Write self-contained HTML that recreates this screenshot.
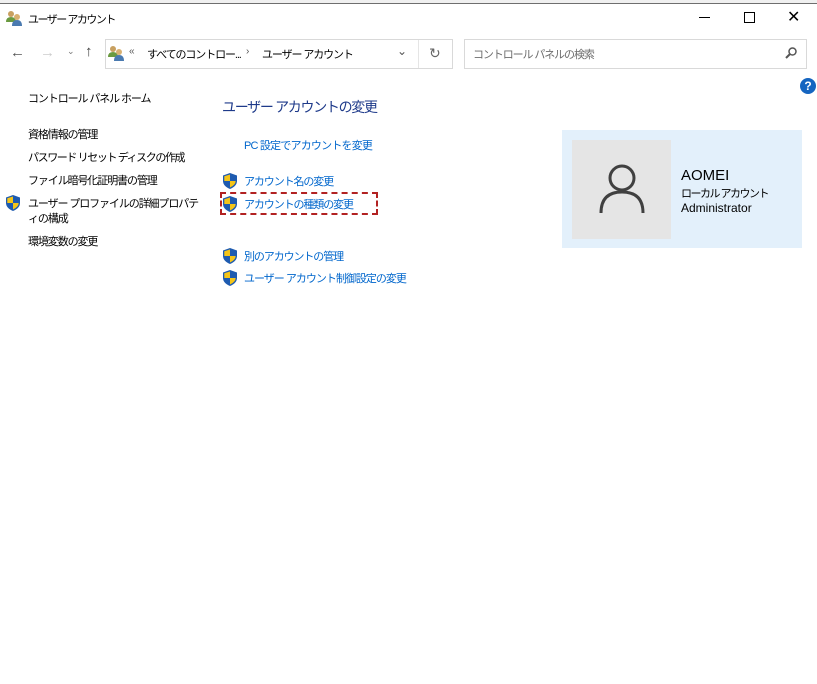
<!DOCTYPE html><html><head><meta charset="utf-8"><style>
body{margin:0;width:817px;height:684px;background:#fff;position:relative;overflow:hidden;font-family:"Liberation Sans","Noto Sans CJK JP",sans-serif;font-size:12px;color:#000}
.a{position:absolute;white-space:nowrap}
.j{font-size:11px;letter-spacing:-1.1px}
.l{color:#0066cc}
.sh{position:absolute;width:14px;height:16px}
</style></head><body>
<div class="a" style="left:0;top:0;width:817px;height:3px;background:#f0f0f0;border-bottom:1px solid #6e6e6e"></div>
<svg class="a" style="left:6px;top:10px" width="16" height="16"><circle cx="5" cy="4" r="3" fill="#c8a060"/><path d="M0 12q0-5 5-5t5 5z" fill="#6a9a40"/><circle cx="11" cy="7" r="3" fill="#d8b070"/><path d="M6 16q0-6 5-6t5 6z" fill="#4a7ab0"/></svg>
<div class="a j" style="left:28px;top:11px;letter-spacing:-1.5px">ユーザー アカウント</div>
<div class="a" style="left:699px;top:17px;width:11px;height:1px;background:#000"></div>
<div class="a" style="left:744px;top:12px;width:9px;height:9px;border:1px solid #000"></div>
<div class="a" style="left:787px;top:7px;font-size:16px">✕</div>
<div class="a" style="left:10px;top:44px;font-size:15px;color:#555">←</div>
<div class="a" style="left:40px;top:44px;font-size:15px;color:#ccc">→</div>
<div class="a" style="left:67px;top:46px;font-size:9px;color:#777">⌄</div>
<div class="a" style="left:85px;top:43px;font-size:15px;color:#444">↑</div>
<div class="a" style="left:105px;top:39px;width:346px;height:28px;border:1px solid #d9d9d9"></div>
<div class="a" style="left:418px;top:40px;width:1px;height:28px;background:#e5e5e5"></div>
<svg class="a" style="left:108px;top:45px" width="16" height="16"><circle cx="5" cy="4" r="3" fill="#c8a060"/><path d="M0 12q0-5 5-5t5 5z" fill="#6a9a40"/><circle cx="11" cy="7" r="3" fill="#d8b070"/><path d="M6 16q0-6 5-6t5 6z" fill="#4a7ab0"/></svg>
<div class="a" style="left:129px;top:46px;font-size:10px;color:#555">«</div>
<div class="a j" style="left:147px;top:46px">すべてのコントロー...</div>
<div class="a" style="left:246px;top:46px;font-size:10px;color:#555">›</div>
<div class="a j" style="left:262px;top:46px">ユーザー アカウント</div>
<div class="a" style="left:397px;top:44px;font-size:12px;color:#555">⌄</div>
<div class="a" style="left:429px;top:45px;font-size:14px;color:#666">↻</div>
<div class="a" style="left:464px;top:39px;width:341px;height:28px;border:1px solid #d9d9d9"></div>
<div class="a j" style="left:473px;top:46px;color:#6d6d6d">コントロール パネルの検索</div>
<svg class="a" style="left:784px;top:46px" width="14" height="14"><circle cx="8.5" cy="5.5" r="3.5" fill="none" stroke="#555" stroke-width="1.5"/><path d="M6 8L2 12" stroke="#555" stroke-width="2"/></svg>
<div class="a" style="left:800px;top:78px;width:16px;height:16px;border-radius:50%;background:#1565c0;color:#fff;font-weight:bold;font-size:12px;text-align:center;line-height:16px">?</div>
<div class="a j" style="left:28px;top:90px">コントロール パネル ホーム</div>
<div class="a j" style="left:28px;top:126px">資格情報の管理</div>
<div class="a j" style="left:28px;top:149px;letter-spacing:-1.4px">パスワード リセット ディスクの作成</div>
<div class="a j" style="left:28px;top:172px">ファイル暗号化証明書の管理</div>
<div class="a j" style="left:28px;top:195px">ユーザー プロファイルの詳細プロパテ</div>
<div class="a j" style="left:28px;top:210px">ィの構成</div>
<div class="a j" style="left:28px;top:233px">環境変数の変更</div>
<div class="a" style="left:222px;top:97px;font-size:14px;letter-spacing:-1.3px;color:#1e3a8a">ユーザー アカウントの変更</div>
<div class="a l j" style="left:244px;top:137px;letter-spacing:-0.8px">PC 設定でアカウントを変更</div>
<div class="a l j" style="left:244px;top:173px">アカウント名の変更</div>
<div class="a l j" style="left:244px;top:196px">アカウントの種類の変更</div>
<div class="a l j" style="left:244px;top:248px">別のアカウントの管理</div>
<div class="a l j" style="left:244px;top:270px;letter-spacing:-1px">ユーザー アカウント制御設定の変更</div>
<div class="a" style="left:220px;top:192px;width:154px;height:19px;border:2px dashed #b22222"></div>
<svg width="0" height="0" style="position:absolute"><defs><g id="s"><path d="M7 0L14 2.5V8Q14 13 7 16Q0 13 0 8V2.5Z" fill="#1e5bb0"/><path d="M7 1.5V8H1.3V3.3L7 1.5ZM7 8H12.7Q12.5 12 7 14.5Z" fill="#f5c518"/></g></defs></svg>
<svg class="sh" style="left:6px;top:195px"><use href="#s"/></svg>
<svg class="sh" style="left:223px;top:173px"><use href="#s"/></svg>
<svg class="sh" style="left:223px;top:196px"><use href="#s"/></svg>
<svg class="sh" style="left:223px;top:248px"><use href="#s"/></svg>
<svg class="sh" style="left:223px;top:270px"><use href="#s"/></svg>
<div class="a" style="left:562px;top:130px;width:240px;height:118px;background:#e3f0fb"></div>
<div class="a" style="left:572px;top:140px;width:99px;height:99px;background:#e5e5e5"></div>
<svg class="a" style="left:598px;top:163px" width="48" height="52"><circle cx="24" cy="15" r="12" fill="none" stroke="#404040" stroke-width="3"/><path d="M3 50Q3 29 24 29Q45 29 45 50" fill="none" stroke="#404040" stroke-width="3"/></svg>
<div class="a" style="left:681px;top:167px;font-size:15px">AOMEI</div>
<div class="a j" style="left:681px;top:185px;letter-spacing:-1.5px">ローカル アカウント</div>
<div class="a" style="left:681px;top:201px">Administrator</div>
</body></html>
